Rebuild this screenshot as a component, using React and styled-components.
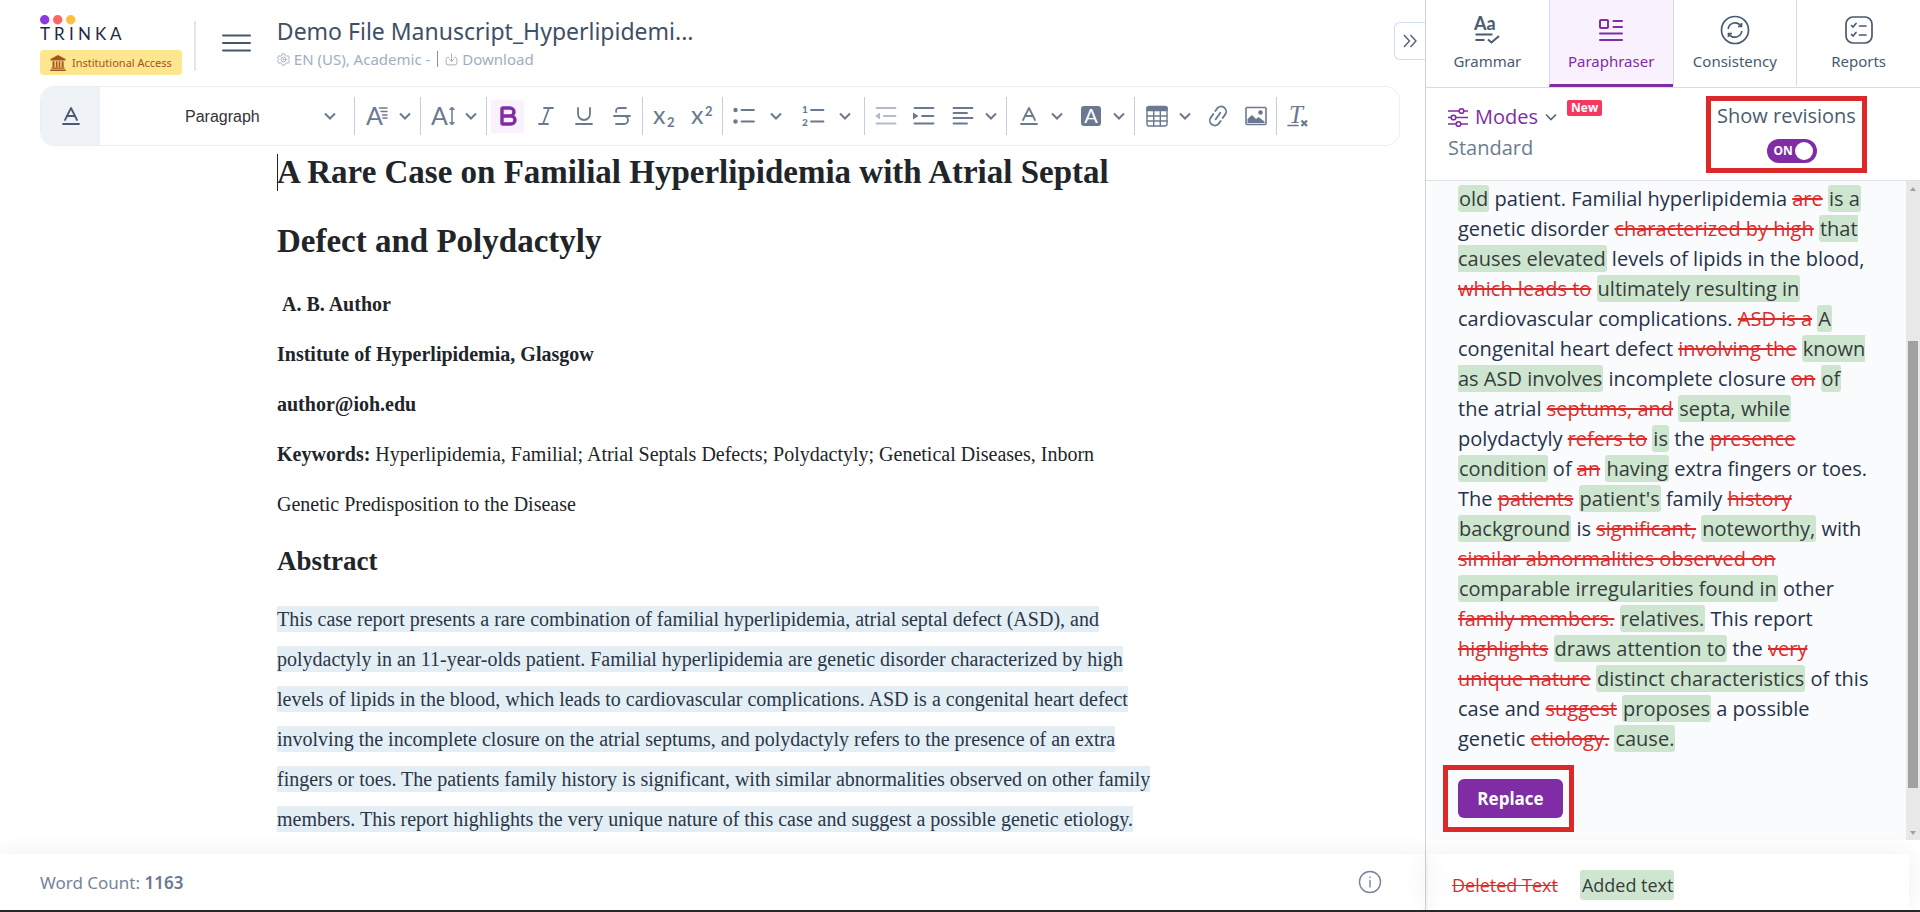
import React from "react"
import styled, { createGlobalStyle } from "styled-components"
import { Baseline, Bold, Italic, Strikethrough, Underline } from "lucide-react"

const GlobalStyle = createGlobalStyle`
  * {
    box-sizing: border-box;
  }
  body {
    margin: 0;
    background: #fff;
    font-family: "Open Sans", "Noto Sans", sans-serif;
    color: #4a5568;
  }
  button, select {
    font: inherit;
    color: inherit;
    background: none;
    border: none;
    padding: 0;
    cursor: pointer;
  }
  svg {
    display: block;
    flex: none;
    overflow: visible;
  }
`

const Page = styled.div`
  display: flex;
  height: 100vh;
  overflow: hidden;
  border-bottom: 2px solid #27282b;
`

const Editor = styled.main`
  flex: 1;
  min-width: 0;
  display: flex;
  flex-direction: column;
`

const Header = styled.header`
  flex: none;
  display: flex;
  align-items: flex-start;
  height: 86px;
  padding-left: 40px;
`

const Brand = styled.a`
  display: flex;
  flex-direction: column;
  gap: 8px;
  padding-top: 14px;
  color: inherit;
  text-decoration: none;
`

const Access = styled.span`
  display: flex;
  align-items: center;
  gap: 6px;
  height: 25px;
  padding: 0 10px;
  border-radius: 4px;
  background: #fee68f;
  color: #a3541f;
  font: 11px "Noto Sans", sans-serif;
  white-space: nowrap;
`

const Divider = styled.span`
  width: 2px;
  height: 50px;
  margin: 21px 26px 0 12px;
  background: #e2e6ea;
`

const MenuButton = styled.button`
  margin: 33px 26px 0 0;
`

const FileInfo = styled.div`
  flex: 1;
  min-width: 0;
  padding-top: 14px;
`

const FileName = styled.h1`
  margin: 0;
  font: 400 23px/34px "Noto Sans", sans-serif;
  color: #3f4f66;
`

const FileMeta = styled.div`
  display: flex;
  align-items: center;
  height: 22px;
  gap: 7px;
  font: 15px/22px "Noto Sans", sans-serif;
  color: #a0aec0;
  button {
    display: flex;
    align-items: center;
    gap: 4px;
  }
`

const MetaBar = styled.span`
  width: 1px;
  height: 16px;
  background: #8492a6;
`

const CollapseButton = styled.button`
  display: flex;
  align-items: center;
  justify-content: center;
  width: 31px;
  height: 38px;
  margin-top: 22px;
  border: 1px solid #d3dcee;
  border-right: none;
  border-radius: 6px 0 0 6px;
`

const Toolbar = styled.div`
  flex: none;
  display: flex;
  align-items: center;
  height: 60px;
  margin: 0 25px 0 40px;
  border: 1px solid #eceff2;
  border-radius: 14px;
  overflow: hidden;
  color: #6b7990;
`

const StyleTab = styled.button`
  display: flex;
  align-items: center;
  justify-content: center;
  width: 59px;
  height: 60px;
  background: #eff3f8;
  color: #4a5a72;
`

const StylePicker = styled.label`
  display: grid;
  align-items: center;
  width: 254px;
  > * {
    grid-area: 1 / 1;
  }
  svg {
    justify-self: end;
    margin-right: 18px;
    pointer-events: none;
  }
`

const StyleSelect = styled.select`
  appearance: none;
  width: 100%;
  height: 38px;
  padding-left: 85px;
  font: 16px "Liberation Sans", Arial, sans-serif;
  color: #333;
`

const Group = styled.div`
  display: flex;
  align-items: center;
  gap: 5px;
  height: 38px;
  padding: 0 4px;
  border-left: 1px solid #c5ced9;
`

const Tool = styled.button`
  display: flex;
  align-items: center;
  justify-content: center;
  width: 33px;
  height: 33px;
  border-radius: 3px;
  background: ${({ $active }) => ($active ? "#f9f1fe" : "none")};
  color: ${({ $active }) => ($active ? "#802da5" : "inherit")};
  opacity: ${({ disabled }) => (disabled ? 0.5 : 1)};
`

const DropTool = styled.button`
  display: flex;
  align-items: center;
  gap: 10px;
  width: 57px;
  height: 33px;
  padding-left: 6px;
`

const Split = styled.div`
  display: flex;
`

const SplitArrow = styled(Tool)`
  width: 31px;
`

const Canvas = styled.article`
  flex: 1;
  min-height: 0;
  overflow: hidden;
  padding: 0 262px 0 277px;
  font: 20px/50px "Liberation Serif", "Times New Roman", serif;
  color: #212529;
`

const PaperTitle = styled.h1`
  margin: -8px 0 3px;
  font-size: 33px;
  line-height: 69px;
`

const Caret = styled.span`
  position: absolute;
  width: 1px;
  height: 37px;
  margin-top: 16px;
  background: #222;
`

const Line = styled.p`
  margin: 0;
  white-space: pre-wrap;
`

const SectionTitle = styled.h2`
  margin: 0 0 6px;
  font-size: 27px;
  line-height: 64px;
`

const Abstract = styled.p`
  margin: 0;
  line-height: 40px;
  color: #2b3647;
`

const Selected = styled.span`
  padding: 2px 0;
  background: #e4eff5;
`

const Footer = styled.footer`
  flex: none;
  display: flex;
  align-items: center;
  justify-content: space-between;
  height: 56px;
  padding: 0 43px 0 40px;
  background: #fff;
  box-shadow: 0 0 24px rgba(40, 50, 60, 0.08);
  font: 17px "Noto Sans", sans-serif;
  color: #76839a;
  strong {
    font-weight: 600;
    color: #6b7892;
  }
`

const Panel = styled.aside`
  flex: none;
  display: flex;
  flex-direction: column;
  width: 495px;
  border-left: 1px solid #ccd3dd;
`

const Tabs = styled.nav`
  flex: none;
  display: flex;
  height: 88px;
  border-bottom: 1px solid #d5dbe9;
`

const Tab = styled.button`
  flex: 1;
  display: flex;
  flex-direction: column;
  align-items: center;
  gap: 5px;
  padding-top: 15px;
  border-bottom: 3px solid ${({ $active }) => ($active ? "#802da5" : "transparent")};
  background: ${({ $active }) => ($active ? "#f9f1fe" : "none")};
  color: ${({ $active }) => ($active ? "#802da5" : "#4a5a70")};
  font: 15px/22px "Noto Sans", sans-serif;
  & + & {
    border-left: 1px solid #d5d9ec;
  }
`

const ModeBar = styled.div`
  flex: none;
  display: flex;
  justify-content: space-between;
  height: 93px;
  padding: 8px 53px 0 22px;
  border-bottom: 1px solid #dfe3e8;
  font-size: 20px;
  line-height: 30px;
`

const Modes = styled.div`
  display: flex;
  flex-direction: column;
  gap: 1px;
  padding-top: 6px;
  color: #6d7c90;
`

const ModeRow = styled.div`
  display: flex;
  align-items: flex-start;
  gap: 10px;
`

const ModeButton = styled.button`
  display: flex;
  align-items: center;
  gap: 7px;
  color: #802da5;
`

const Badge = styled.span`
  height: 16px;
  padding: 0 4px;
  border-radius: 2px;
  background: #f43860;
  color: #fff;
  font-size: 12px;
  font-weight: 700;
  line-height: 16px;
  margin-top: -2px;
`

const Callout = styled.div`
  border: 5px solid #dc2828;
`

const RevisionBox = styled(Callout)`
  height: 77px;
  width: 161px;
`

const RevisionLabel = styled.label`
  display: flex;
  flex-direction: column;
  align-items: center;
  gap: 8px;
  color: #4b5b6b;
  white-space: nowrap;
  cursor: pointer;
`

const Switch = styled.span`
  display: flex;
  align-items: center;
  justify-content: space-between;
  width: 50px;
  height: 24px;
  margin-left: 10px;
  padding: 0 4px 0 7px;
  border-radius: 12px;
  background: #802da5;
  color: #fff;
  font-size: 12px;
  font-weight: 700;
  input {
    appearance: none;
    width: 18px;
    height: 18px;
    margin: 0;
    border-radius: 50%;
    background: #fff;
  }
`

const Result = styled.section`
  flex: 1;
  min-height: 0;
  display: flex;
  margin-left: 2px;
  background: #fafbfd;
`

const ResultBody = styled.div`
  flex: 1;
  overflow: hidden;
  padding: 3px 32px 0 30px;
`

const Revision = styled.p`
  margin: 0 0 11px;
  font-size: 20px;
  line-height: 30px;
  color: #26324a;
`

const Deleted = styled.del`
  color: #e02a2a;
`

const Added = styled.ins`
  padding: 0 1px;
  border-radius: 3px;
  background: #cee6d0;
  color: #363d3c;
  text-decoration: none;
`

const ReplaceBox = styled(Callout)`
  width: max-content;
  margin-left: -15px;
  padding: 9px 6px 9px 10px;
`

const ReplaceButton = styled.button`
  display: block;
  width: 105px;
  height: 39px;
  border-radius: 6px;
  background: #802da5;
  color: #fff;
  font-size: 17px;
  font-weight: 700;
`

const ScrollTrack = styled.div`
  display: flex;
  flex-direction: column;
  justify-content: space-between;
  align-items: center;
  width: 14px;
  padding: 6px 0 5px;
  background: #e8e8e8;
`

const ScrollThumb = styled.div`
  width: 10px;
  height: 69%;
  margin-top: auto;
  margin-bottom: 43px;
  background: #a1a1a1;
`

const Legend = styled.footer`
  flex: none;
  display: flex;
  align-items: center;
  gap: 22px;
  height: 56px;
  margin: 14px 11px 0 2px;
  padding: 6px 24px 0;
  box-shadow: 0 0 24px rgba(40, 50, 60, 0.08);
  font-size: 18px;
  line-height: 30px;
`

const LegendAdded = styled(Added)`
  padding: 0 1px 0 2px;
`

const Icon = ({ size = 24, children, ...rest }) => (
  <svg
    width={size}
    height={size}
    viewBox="0 0 24 24"
    fill="none"
    stroke="currentColor"
    strokeWidth="1.8"
    strokeLinecap="round"
    strokeLinejoin="round"
    aria-hidden="true"
    {...rest}
  >
    {children}
  </svg>
)

const Letter = ({ children, size = 22, fill = "currentColor", ...rest }) => (
  <text fontSize={size} fontFamily="Lato, sans-serif" fill={fill} stroke="none" {...rest}>
    {children}
  </text>
)

const Chevron = ({ color = "currentColor", weight = 2 }) => (
  <svg width="12" height="8" viewBox="0 0 12 8" fill="none" stroke={color} strokeWidth={weight} aria-hidden="true">
    <path d="M1 1.5 6 6.5 11 1.5" />
  </svg>
)

const Logo = () => (
  <svg width="86" height="28" viewBox="0 0 86 28" role="img" aria-label="Trinka">
    <circle cx="4.7" cy="5.7" r="4.7" fill="#9038e0" />
    <circle cx="17.7" cy="5.7" r="4.7" fill="#ff6464" />
    <circle cx="30.7" cy="5.7" r="4.7" fill="#ffbf40" />
    <text x="0 14 29 38 55 70" y="26" fontSize="17" fontFamily="Lato, sans-serif" fill="#1f2a44">
      TRINKA
    </text>
  </svg>
)

const BankIcon = () => (
  <svg width="16" height="16" viewBox="0 0 16 16" fill="#a3541f" aria-hidden="true">
    <path d="M8 0 15.5 4v1.5H.5V4zM2.5 6.2h2v6h-2zM5.8 6.2h1.7v6H5.8zM8.6 6.2h1.7v6H8.6zM11.6 6.2h2v6h-2zM1.5 12.4h13v1.3h-13zM.3 14.4h15.4V16H.3z" />
  </svg>
)

const GearIcon = () => (
  <Icon size={13} strokeWidth="1.7">
    <path d="M9.5 1.5h5l.8 3.2 2.2 1.2 3.2-.9 2.4 4.2-2.3 2.3v1l2.3 2.3-2.4 4.2-3.2-.9-2.2 1.2-.8 3.2h-5l-.8-3.2-2.2-1.2-3.2.9L.9 14.8l2.3-2.3v-1L.9 9.2 3.3 5l3.2.9 2.2-1.2z" />
    <circle cx="12" cy="12" r="4.5" />
    <circle cx="12" cy="12" r="1" />
  </Icon>
)

const DownloadIcon = () => (
  <Icon size={13}>
    <path d="M12 2v13M8 11.5l4 4 4-4M7 8H5a4 4 0 0 0-3 4v6a4 4 0 0 0 4 4h12a4 4 0 0 0 4-4v-6a4 4 0 0 0-3-4h-2" />
  </Icon>
)

const FontSizeIcon = () => (
  <Icon>
    <Letter x="1" y="21" size={25}>A</Letter>
    <path d="M14.5 4H22M16 7.5h6M17.5 11H22M18 14h4" strokeWidth="1.5" />
  </Icon>
)

const LineHeightIcon = () => (
  <Icon>
    <Letter x="0" y="21" size={25}>A</Letter>
    <path d="M21 4v16M19 5.5 21 3.5l2 2M19 18.5l2 2 2-2" strokeWidth="1.5" />
  </Icon>
)

const SubscriptIcon = () => (
  <Icon>
    <Letter x="1" y="20" size={25}>x</Letter>
    <Letter x="15" y="23" size={13} fontWeight="700">2</Letter>
  </Icon>
)

const SuperscriptIcon = () => (
  <Icon>
    <Letter x="1" y="20" size={25}>x</Letter>
    <Letter x="15" y="12" size={13} fontWeight="700">2</Letter>
  </Icon>
)

const BulletIcon = () => (
  <Icon>
    <circle cx="3.5" cy="6" r="2.2" fill="currentColor" stroke="none" />
    <circle cx="3.5" cy="17.5" r="2.2" fill="currentColor" stroke="none" />
    <path d="M9.500 6H22M9.500 17.500H22" />
  </Icon>
)

const NumberIcon = () => (
  <Icon>
    <Letter x="1" y="9" size={10} fontWeight="900">1</Letter>
    <Letter x="1" y="21.5" size={10} fontWeight="900">2</Letter>
    <path d="M10 6h12.5M10 17.5h12.5" />
  </Icon>
)

const OutdentIcon = () => (
  <Icon>
    <path d="M2.5 4h19M10 12h11.5M2.5 19.5h19" />
    <path d="M6 8.5v7L1 12z" fill="currentColor" stroke="none" />
  </Icon>
)

const IndentIcon = () => (
  <Icon>
    <path d="M2.5 4h19M10 12h11.5M2.5 19.5h19" />
    <path d="M1 8.5v7L6.5 12z" fill="currentColor" stroke="none" />
  </Icon>
)

const AlignIcon = () => (
  <Icon>
    <path d="M2.5 4h19M2.5 9H16M2.5 14h19M2.5 19.5H16" />
  </Icon>
)

const HighlightIcon = () => (
  <Icon>
    <rect x="2" y="2" width="20" height="20" rx="3" fill="currentColor" stroke="none" />
    <Letter x="12" y="19" size={20} fill="#fff" textAnchor="middle">A</Letter>
  </Icon>
)

const TableIcon = () => (
  <Icon strokeWidth="1.4">
    <rect x="2" y="2.5" width="20" height="19.5" rx="2" />
    <path d="M2 3.5h20v3H2z" fill="currentColor" />
    <path d="M2 12h20M2 17h20M8.7 7v15M15.3 7v15" />
  </Icon>
)

const LinkIcon = () => (
  <Icon>
    <g transform="rotate(-55 12 12)">
      <path d="M9.500 17H6.500a5 5 0 0 1 0-10h4.500M14.500 7h3a5 5 0 0 1 0 10H13M8 12h8" />
    </g>
  </Icon>
)

const PictureIcon = () => (
  <Icon strokeWidth="1.6">
    <rect x="2" y="3.5" width="20" height="17" rx="1" />
    <path d="M3.5 19v-4L8 11l4 4 2.5-2 6 4.5V19z" fill="currentColor" stroke="none" />
    <circle cx="16.5" cy="8.5" r="2.3" fill="currentColor" stroke="none" />
  </Icon>
)

const ClearFormatIcon = () => (
  <Icon strokeWidth="1.6">
    <Letter x="3" y="19" size={25} fontFamily="Liberation Serif, serif" fontStyle="italic">
      T
    </Letter>
    <path d="M2 21.5h10" />
    <path d="M15.5 16.500 21 22M21 16.500 15.500 22" strokeWidth="2.200" strokeLinecap="butt" />
  </Icon>
)

const GrammarIcon = () => (
  <svg width="28" height="30" viewBox="0 0 28 30" fill="none" stroke="currentColor" strokeWidth="2" aria-hidden="true">
    <text x="1" y="15" fontSize="18" fontWeight="700" fontFamily="Lato, sans-serif" fill="currentColor" stroke="none">
      Aa
    </text>
    <path d="M2.5 19.5h17M2.5 25h9M15 24.5l3.5 3L26 21" />
  </svg>
)

const ParaphraseIcon = () => (
  <svg width="28" height="30" viewBox="0 0 28 30" fill="none" stroke="currentColor" strokeWidth="2" strokeLinecap="round" aria-hidden="true">
    <rect x="3" y="5" width="8" height="8" rx="1" />
    <path d="M16.5 6H25M16.5 12H25M3 18.5h22M3 25h22" />
  </svg>
)

const ConsistencyIcon = () => (
  <svg width="30" height="30" viewBox="0 0 30 30" fill="none" stroke="currentColor" strokeWidth="1.7" aria-hidden="true">
    <circle cx="15" cy="15" r="13.5" />
    <path d="M8.200 14a7 7 0 0 1 12.800-3M21.800 16A7 7 0 0 1 9 19" />
    <path d="M21.5 8v3.5H18M8.5 22v-3.5H12" />
  </svg>
)

const ReportsIcon = () => (
  <svg width="30" height="30" viewBox="0 0 30 30" fill="none" stroke="currentColor" strokeWidth="1.7" strokeLinecap="round" aria-hidden="true">
    <rect x="2" y="2" width="26" height="26" rx="7" />
    <path d="M7.5 10.5 9 12l3-3.5M7.5 19.5 9 21l3-3.5M15.5 11H22M15.5 20H22" />
  </svg>
)

const SlidersIcon = () => (
  <svg width="20" height="20" viewBox="0 0 20 20" fill="none" stroke="currentColor" strokeWidth="1.6" aria-hidden="true">
    <path d="M0 4h11M16 4h4M0 10.5h3M8 10.5h12M0 17h8M13 17h7" />
    <circle cx="13.5" cy="4" r="2.3" />
    <circle cx="5.5" cy="10.5" r="2.3" />
    <circle cx="10.5" cy="17" r="2.3" />
  </svg>
)

const InfoIcon = () => (
  <Icon strokeWidth="1.4">
    <circle cx="12" cy="12" r="10.5" />
    <path d="M12 10.5V17M12 7v.5" />
  </Icon>
)

const TABS = [
  { label: "Grammar", icon: <GrammarIcon /> },
  { label: "Paraphraser", icon: <ParaphraseIcon /> },
  { label: "Consistency", icon: <ConsistencyIcon /> },
  { label: "Reports", icon: <ReportsIcon /> },
]

// "-" deleted, "+" added, "" unchanged
const REVISIONS = [
  ["+", "old"],
  ["", "patient. Familial hyperlipidemia"],
  ["-", "are"],
  ["+", "is a"],
  ["", "genetic disorder"],
  ["-", "characterized by high"],
  ["+", "that causes elevated"],
  ["", "levels of lipids in the blood,"],
  ["-", "which leads to"],
  ["+", "ultimately resulting in"],
  ["", "cardiovascular complications."],
  ["-", "ASD is a"],
  ["+", "A"],
  ["", "congenital heart defect"],
  ["-", "involving the"],
  ["+", "known as ASD involves"],
  ["", "incomplete closure"],
  ["-", "on"],
  ["+", "of"],
  ["", "the atrial"],
  ["-", "septums, and"],
  ["+", "septa, while"],
  ["", "polydactyly"],
  ["-", "refers to"],
  ["+", "is"],
  ["", "the"],
  ["-", "presence"],
  ["+", "condition"],
  ["", "of"],
  ["-", "an"],
  ["+", "having"],
  ["", "extra fingers or toes. The"],
  ["-", "patients"],
  ["+", "patient's"],
  ["", "family"],
  ["-", "history"],
  ["+", "background"],
  ["", "is"],
  ["-", "significant,"],
  ["+", "noteworthy,"],
  ["", "with"],
  ["-", "similar abnormalities observed on"],
  ["+", "comparable irregularities found in"],
  ["", "other"],
  ["-", "family members."],
  ["+", "relatives."],
  ["", "This report"],
  ["-", "highlights"],
  ["+", "draws attention to"],
  ["", "the"],
  ["-", "very unique nature"],
  ["+", "distinct characteristics"],
  ["", "of this case and"],
  ["-", "suggest"],
  ["+", "proposes"],
  ["", "a possible genetic"],
  ["-", "etiology."],
  ["+", "cause."],
]

const marks = { "-": Deleted, "+": Added, "": React.Fragment }

const EditorToolbar = () => (
  <Toolbar>
    <StyleTab aria-label="Text styles">
      <Baseline size={24} strokeWidth={1.8} />
    </StyleTab>
    <StylePicker>
      <StyleSelect aria-label="Block style" defaultValue="Paragraph">
        <option>Paragraph</option>
      </StyleSelect>
      <Chevron />
    </StylePicker>
    <Group>
      <DropTool aria-label="Font size">
        <FontSizeIcon />
        <Chevron />
      </DropTool>
    </Group>
    <Group>
      <DropTool aria-label="Line height">
        <LineHeightIcon />
        <Chevron />
      </DropTool>
    </Group>
    <Group>
      <Tool aria-label="Bold" $active>
        <Bold size={24} strokeWidth={3.4} />
      </Tool>
      <Tool aria-label="Italic">
        <Italic size={24} strokeWidth={1.8} />
      </Tool>
      <Tool aria-label="Underline">
        <Underline size={24} strokeWidth={1.8} />
      </Tool>
      <Tool aria-label="Strikethrough">
        <Strikethrough size={24} strokeWidth={1.8} />
      </Tool>
    </Group>
    <Group>
      <Tool aria-label="Subscript">
        <SubscriptIcon />
      </Tool>
      <Tool aria-label="Superscript">
        <SuperscriptIcon />
      </Tool>
    </Group>
    <Group>
      <Split>
        <Tool aria-label="Bulleted list">
          <BulletIcon />
        </Tool>
        <SplitArrow aria-label="Bullet options">
          <Chevron />
        </SplitArrow>
      </Split>
      <Split>
        <Tool aria-label="Numbered list">
          <NumberIcon />
        </Tool>
        <SplitArrow aria-label="Numbering options">
          <Chevron />
        </SplitArrow>
      </Split>
    </Group>
    <Group>
      <Tool aria-label="Decrease indent" disabled>
        <OutdentIcon />
      </Tool>
      <Tool aria-label="Increase indent">
        <IndentIcon />
      </Tool>
      <DropTool aria-label="Alignment">
        <AlignIcon />
        <Chevron />
      </DropTool>
    </Group>
    <Group>
      <DropTool aria-label="Font colour">
        <Baseline size={24} strokeWidth={1.8} />
        <Chevron />
      </DropTool>
      <DropTool aria-label="Background colour">
        <HighlightIcon />
        <Chevron />
      </DropTool>
    </Group>
    <Group>
      <DropTool aria-label="Table">
        <TableIcon />
        <Chevron />
      </DropTool>
      <Tool aria-label="Link">
        <LinkIcon />
      </Tool>
      <Tool aria-label="Image">
        <PictureIcon />
      </Tool>
    </Group>
    <Group>
      <Tool aria-label="Remove formatting">
        <ClearFormatIcon />
      </Tool>
    </Group>
  </Toolbar>
)

export default function App() {
  return (
    <>
      <GlobalStyle />
      <Page>
        <Editor>
          <Header>
            <Brand href="#">
              <Logo />
              <Access>
                <BankIcon />
                Institutional Access
              </Access>
            </Brand>
            <Divider />
            <MenuButton aria-label="Menu">
              <svg width="29" height="20" viewBox="0 0 29 20" stroke="#46566c" strokeWidth="2" strokeLinecap="round">
                <path d="M1 2.5h27M1 10h27M1 17.5h27" />
              </svg>
            </MenuButton>
            <FileInfo>
              <FileName>Demo File Manuscript_Hyperlipidemi...</FileName>
              <FileMeta>
                <button>
                  <GearIcon />
                  EN (US), Academic -
                </button>
                <MetaBar />
                <button>
                  <DownloadIcon />
                  Download
                </button>
              </FileMeta>
            </FileInfo>
            <CollapseButton aria-label="Collapse panel">
              <svg width="14" height="14" viewBox="0 0 14 14" fill="none" stroke="#4a5a70" strokeWidth="1.3">
                <path d="M1 1l5.5 6L1 13M7.5 1 13 7l-5.5 6" />
              </svg>
            </CollapseButton>
          </Header>
          <EditorToolbar />
          <Canvas>
            <PaperTitle>
              <Caret />A Rare Case on Familial Hyperlipidemia with Atrial Septal Defect and Polydactyly
            </PaperTitle>
            <Line>
              <strong> A. B. Author</strong>
            </Line>
            <Line>
              <strong>Institute of Hyperlipidemia, Glasgow</strong>
            </Line>
            <Line>
              <strong>author@ioh.edu</strong>
            </Line>
            <Line>
              <strong>Keywords:</strong> Hyperlipidemia, Familial; Atrial Septals Defects; Polydactyly; Genetical
              Diseases, Inborn
            </Line>
            <Line>Genetic Predisposition to the Disease</Line>
            <SectionTitle>Abstract</SectionTitle>
            <Abstract>
              <Selected>
                This case report presents a rare combination of familial hyperlipidemia, atrial septal defect (ASD),
                and polydactyly in an 11-year-olds patient. Familial hyperlipidemia are genetic disorder characterized
                by high levels of lipids in the blood, which leads to cardiovascular complications. ASD is a congenital
                heart defect involving the incomplete closure on the atrial septums, and polydactyly refers to the
                presence of an extra fingers or toes. The patients family history is significant, with similar
                abnormalities observed on other family members. This report highlights the very unique nature of this
                case and suggest a possible genetic etiology.
              </Selected>
            </Abstract>
          </Canvas>
          <Footer>
            <span>
              Word Count: <strong>1163</strong>
            </span>
            <button aria-label="Info">
              <InfoIcon />
            </button>
          </Footer>
        </Editor>

        <Panel>
          <Tabs>
            {TABS.map(({ label, icon }) => (
              <Tab key={label} $active={label === "Paraphraser"}>
                {icon}
                {label}
              </Tab>
            ))}
          </Tabs>
          <ModeBar>
            <Modes>
              <ModeRow>
                <ModeButton>
                  <SlidersIcon />
                  Modes
                  <Chevron color="#56657a" weight={1.6} />
                </ModeButton>
                <Badge>New</Badge>
              </ModeRow>
              <span>Standard</span>
            </Modes>
            <RevisionBox>
              <RevisionLabel>
                Show revisions
                <Switch>
                  ON
                  <input type="checkbox" defaultChecked />
                </Switch>
              </RevisionLabel>
            </RevisionBox>
          </ModeBar>
          <Result>
            <ResultBody>
              <Revision>
                {REVISIONS.map(([kind, text], i) => {
                  const Mark = marks[kind]
                  return (
                    <React.Fragment key={i}>
                      <Mark>{text}</Mark>{" "}
                    </React.Fragment>
                  )
                })}
              </Revision>
              <ReplaceBox>
                <ReplaceButton>Replace</ReplaceButton>
              </ReplaceBox>
            </ResultBody>
            <ScrollTrack>
              <svg width="6" height="4" viewBox="0 0 6 4" fill="#a1a1a1">
                <path d="M3 0 6 4H0z" />
              </svg>
              <ScrollThumb />
              <svg width="6" height="4" viewBox="0 0 6 4" fill="#a1a1a1">
                <path d="M0 0h6L3 4z" />
              </svg>
            </ScrollTrack>
          </Result>
          <Legend>
            <Deleted>Deleted Text</Deleted>
            <LegendAdded>Added text</LegendAdded>
          </Legend>
        </Panel>
      </Page>
    </>
  )
}
